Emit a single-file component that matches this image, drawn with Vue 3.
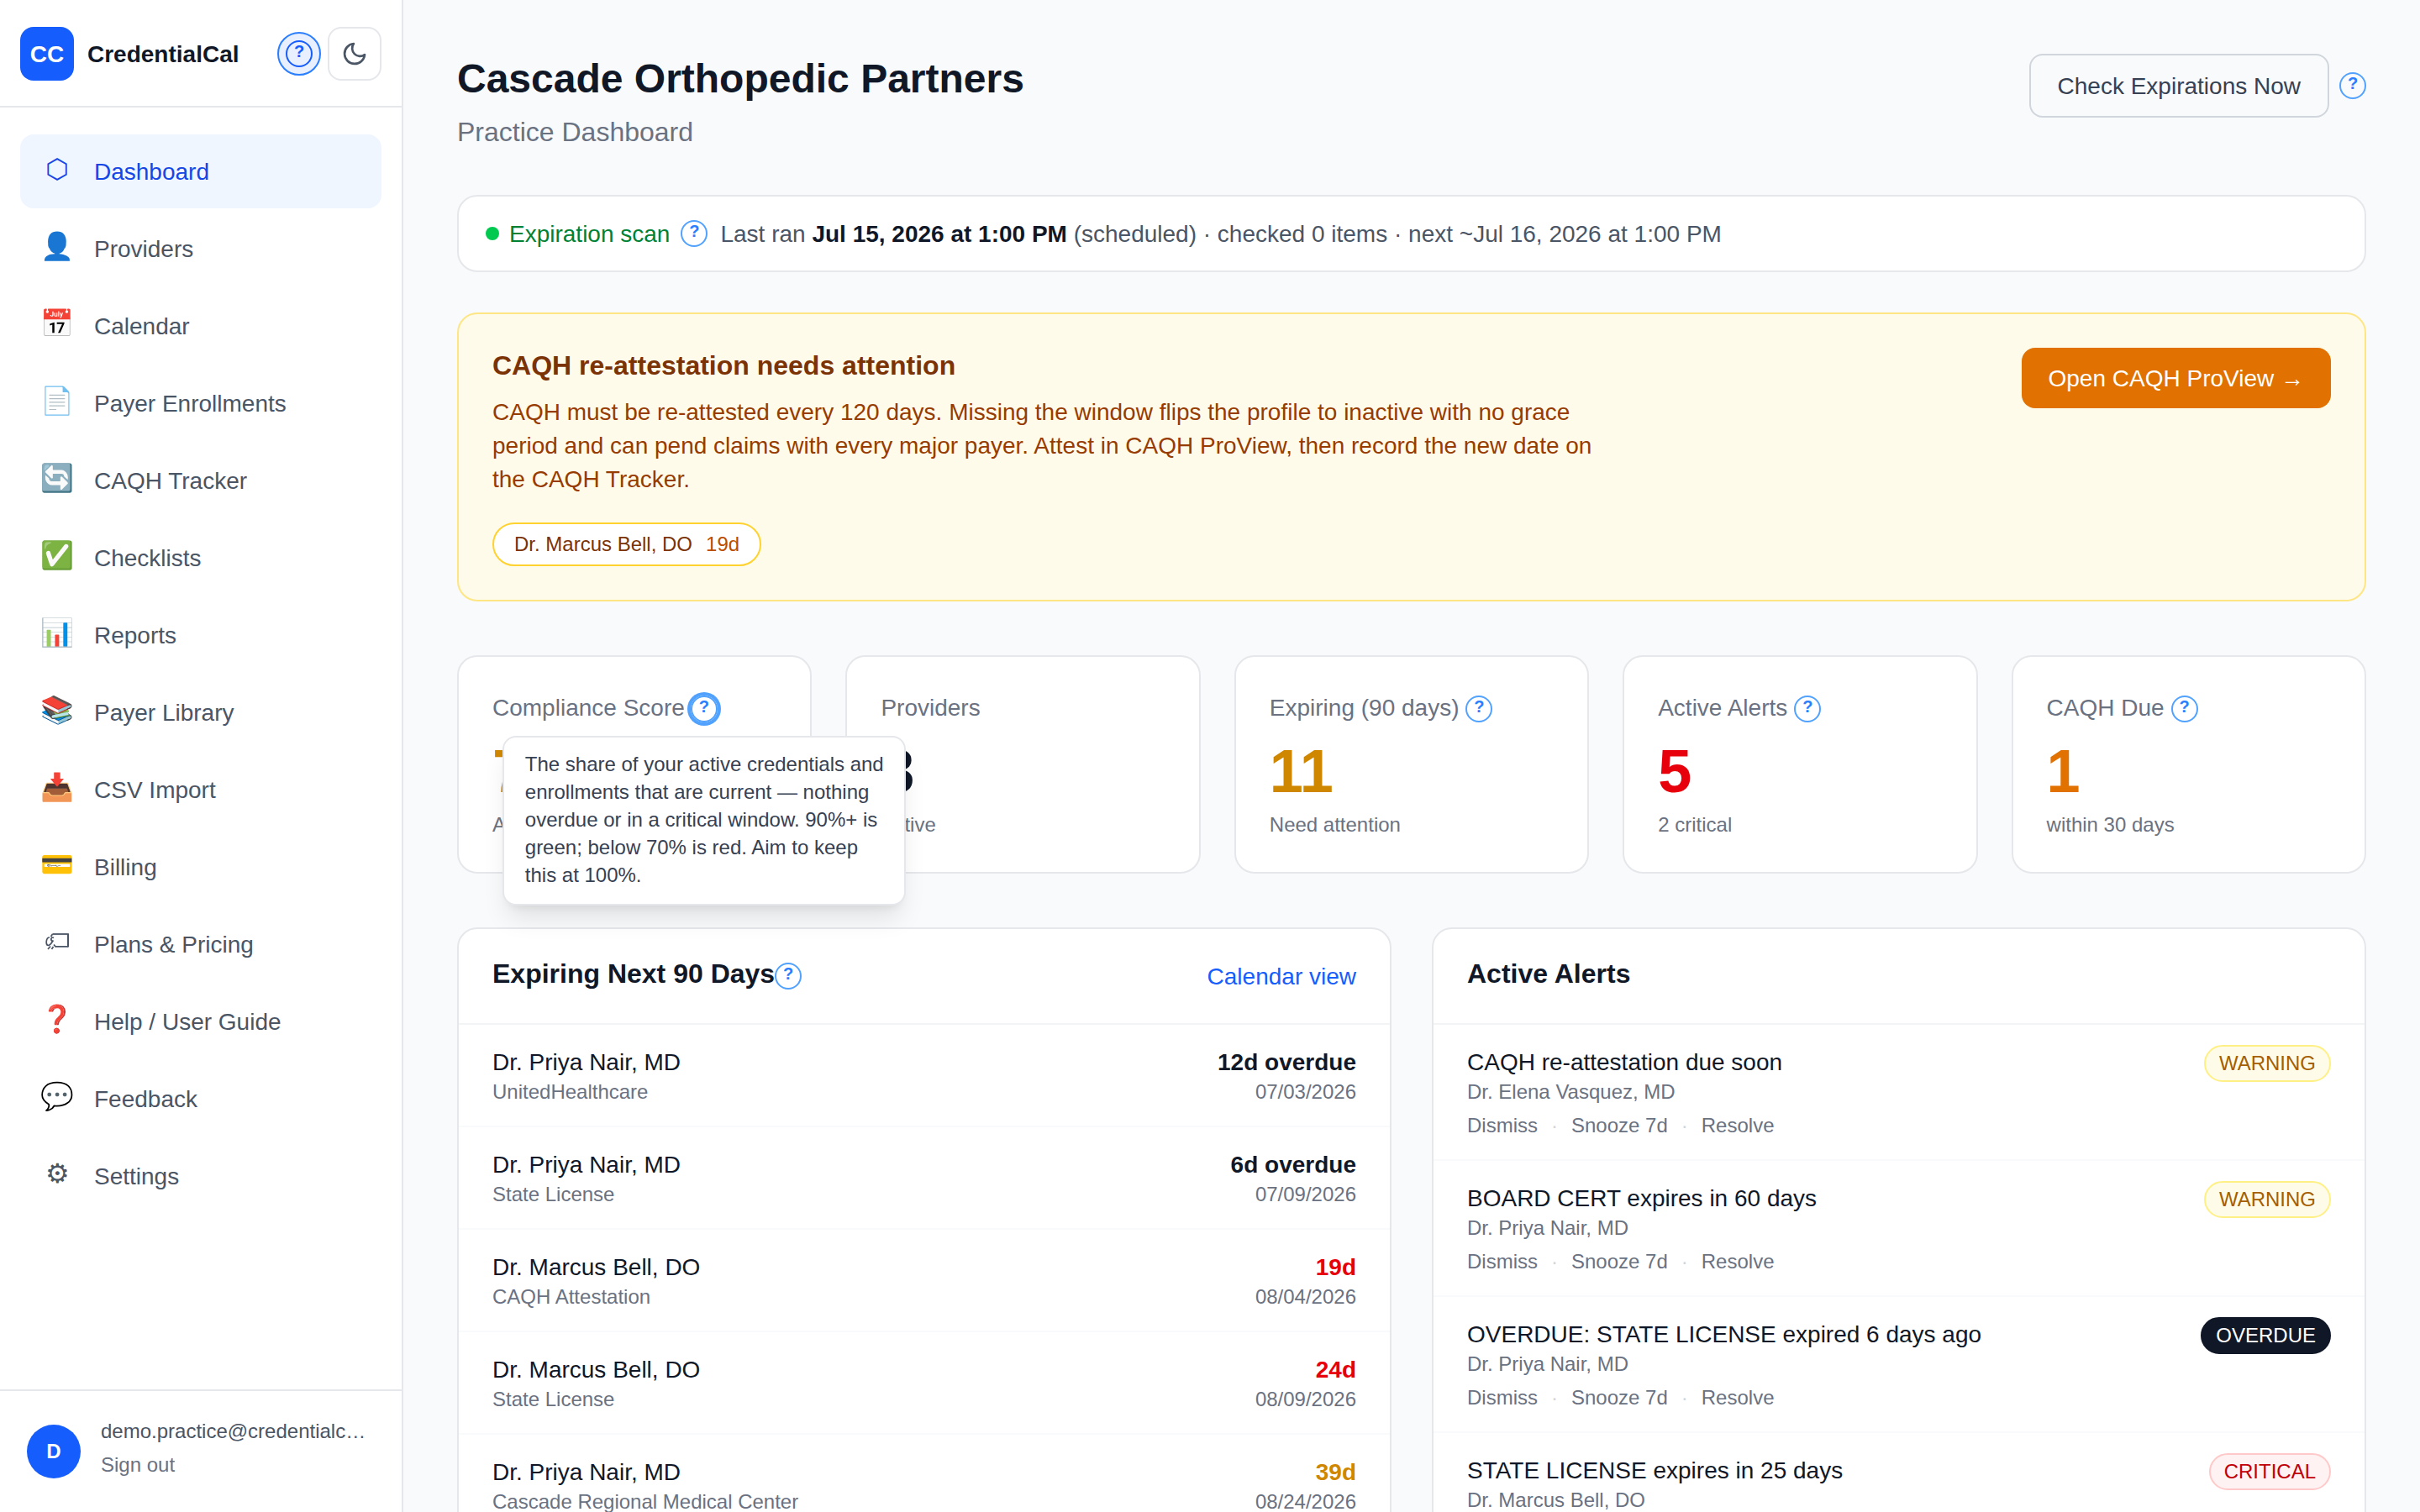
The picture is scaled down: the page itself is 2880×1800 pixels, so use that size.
<template>
    <div class="layout">
        <aside class="sidebar">
            <div class="brand">
                <div class="logo">CC</div>
                <span class="brand-name">CredentialCal</span>
                <button class="tour-btn" title="Help"><span class="help help-strong">?</span></button>
                <button class="theme-btn" title="Toggle theme">
                    <svg viewBox="0 0 24 24" fill="none" stroke="currentColor" stroke-width="2" stroke-linecap="round" stroke-linejoin="round">
                        <path d="M21 12.79A9 9 0 1 1 11.21 3 7 7 0 0 0 21 12.79z" />
                    </svg>
                </button>
            </div>
            <nav class="menu">
                <a v-for="item in menu" :key="item.label" class="menu-item" :class="{ active: item.active }">
                    <span v-if="item.icon" class="menu-icon">{{ item.icon }}</span>
                    <span v-else class="menu-icon">
                        <svg class="tag-icon" viewBox="0 0 28 20" fill="none" stroke="currentColor">
                            <path d="M8.5 1H26.5" stroke-width="1.8" />
                            <path d="M27 0.3V16.6" stroke-width="2" />
                            <path d="M27 15.8H12L10 13.5" stroke-width="1.8" />
                            <path d="M8.5 1L6.5 4M10 5.5C7 3.5 5.5 8 8.5 9.5" stroke-width="1.7" />
                            <path d="M5 5C0.5 5 0 14 3.5 14.5C6 14.5 7.5 11 9.5 8.5M3 19L6 15.5M7.5 19L9.5 16" stroke-width="1.7" />
                        </svg>
                    </span>
                    <span class="menu-label">{{ item.label }}</span>
                </a>
            </nav>
            <div class="account">
                <div class="avatar">D</div>
                <div class="account-info">
                    <div class="email">demo.practice@credentialcal.com</div>
                    <div class="sign-out">Sign out</div>
                </div>
            </div>
        </aside>

        <main class="main">
            <header class="page-header">
                <div>
                    <h1>Cascade Orthopedic Partners</h1>
                    <p>Practice Dashboard</p>
                </div>
                <div class="header-actions">
                    <button class="btn-outline">Check Expirations Now</button>
                    <span class="help">?</span>
                </div>
            </header>

            <section class="scan">
                <span class="dot"></span>
                <span class="scan-label">Expiration scan</span>
                <span class="help">?</span>
                <span class="scan-text">Last ran <b>Jul 15, 2026 at 1:00 PM</b> (scheduled) · checked 0 items · next ~Jul 16, 2026 at 1:00 PM</span>
            </section>

            <section class="banner">
                <div class="banner-body">
                    <h2>CAQH re-attestation needs attention</h2>
                    <p>CAQH must be re-attested every 120 days. Missing the window flips the profile to inactive with no grace period and can pend claims with every major payer. Attest in CAQH ProView, then record the new date on the CAQH Tracker.</p>
                    <span class="chip">Dr. Marcus Bell, DO <em>19d</em></span>
                </div>
                <button class="btn-amber">Open CAQH ProView →</button>
            </section>

            <section class="stats">
                <div v-for="stat in stats" :key="stat.label" class="stat">
                    <div class="stat-label">
                        {{ stat.label }}
                        <span v-if="stat.help" class="help" :class="{ focused: stat.tip }">?
                            <span v-if="stat.tip" class="tooltip">{{ stat.tip }}</span>
                        </span>
                    </div>
                    <div class="stat-value" :class="stat.color">{{ stat.value }}</div>
                    <div class="stat-note">{{ stat.note }}</div>
                </div>
            </section>

            <section class="panels">
                <div class="panel">
                    <div class="panel-header">
                        <h2>Expiring Next 90 Days</h2>
                        <span class="help">?</span>
                        <a class="panel-link">Calendar view</a>
                    </div>
                    <div v-for="(row, i) in expiring" :key="i" class="row">
                        <div>
                            <div class="name">{{ row.name }}</div>
                            <div class="sub">{{ row.type }}</div>
                        </div>
                        <div class="due">
                            <div class="days" :class="row.color">{{ row.days }}</div>
                            <div class="sub">{{ row.date }}</div>
                        </div>
                    </div>
                </div>
                <div class="panel">
                    <div class="panel-header">
                        <h2>Active Alerts</h2>
                    </div>
                    <div v-for="(alert, i) in alerts" :key="i" class="row">
                        <div>
                            <div class="name">{{ alert.title }}</div>
                            <div class="sub">{{ alert.name }}</div>
                            <div class="actions">
                                <span>Dismiss</span><i>·</i><span>Snooze 7d</span><i>·</i><span>Resolve</span>
                            </div>
                        </div>
                        <span class="badge" :class="alert.level.toLowerCase()">{{ alert.level }}</span>
                    </div>
                </div>
            </section>
        </main>
    </div>
</template>

<script setup>
import { ref } from 'vue';

// an item without an icon character gets the drawn tag
const menu = ref([
    { icon: '⬡', label: 'Dashboard', active: true },
    { icon: '👤', label: 'Providers' },
    { icon: '📅', label: 'Calendar' },
    { icon: '📄', label: 'Payer Enrollments' },
    { icon: '🔄', label: 'CAQH Tracker' },
    { icon: '✅', label: 'Checklists' },
    { icon: '📊', label: 'Reports' },
    { icon: '📚', label: 'Payer Library' },
    { icon: '📥', label: 'CSV Import' },
    { icon: '💳', label: 'Billing' },
    { label: 'Plans & Pricing' },
    { icon: '❓', label: 'Help / User Guide' },
    { icon: '💬', label: 'Feedback' },
    { icon: '⚙', label: 'Settings' },
]);

const stats = ref([
    {
        label: 'Compliance Score',
        value: '73%',
        note: 'Active items',
        color: 'yellow',
        help: true,
        tip: 'The share of your active credentials and enrollments that are current — nothing overdue or in a critical window. 90%+ is green; below 70% is red. Aim to keep this at 100%.',
    },
    { label: 'Providers', value: '3', note: 'Active', color: 'dark' },
    { label: 'Expiring (90 days)', value: '11', note: 'Need attention', color: 'yellow', help: true },
    { label: 'Active Alerts', value: '5', note: '2 critical', color: 'red', help: true },
    { label: 'CAQH Due', value: '1', note: 'within 30 days', color: 'amber', help: true },
]);

const expiring = ref([
    { name: 'Dr. Priya Nair, MD', type: 'UnitedHealthcare', days: '12d overdue', date: '07/03/2026', color: 'dark' },
    { name: 'Dr. Priya Nair, MD', type: 'State License', days: '6d overdue', date: '07/09/2026', color: 'dark' },
    { name: 'Dr. Marcus Bell, DO', type: 'CAQH Attestation', days: '19d', date: '08/04/2026', color: 'red' },
    { name: 'Dr. Marcus Bell, DO', type: 'State License', days: '24d', date: '08/09/2026', color: 'red' },
    { name: 'Dr. Priya Nair, MD', type: 'Cascade Regional Medical Center', days: '39d', date: '08/24/2026', color: 'yellow' },
]);

const alerts = ref([
    { title: 'CAQH re-attestation due soon', name: 'Dr. Elena Vasquez, MD', level: 'WARNING' },
    { title: 'BOARD CERT expires in 60 days', name: 'Dr. Priya Nair, MD', level: 'WARNING' },
    { title: 'OVERDUE: STATE LICENSE expired 6 days ago', name: 'Dr. Priya Nair, MD', level: 'OVERDUE' },
    { title: 'STATE LICENSE expires in 25 days', name: 'Dr. Marcus Bell, DO', level: 'CRITICAL' },
]);
</script>

<style>
body {
    margin: 0;
    background: #f9fafb;
}
</style>

<style scoped>
* {
    box-sizing: border-box;
}

.layout {
    display: flex;
    height: 1800px;
    overflow: hidden;
    background: #f9fafb;
    color: #101828;
    font-family: "Liberation Sans", Arial, sans-serif;
    font-size: 28px;
    line-height: 40px;
}

h1,
h2,
p {
    margin: 0;
}

button {
    font: inherit;
    background: none;
    white-space: nowrap;
}

/* Sidebar */
.sidebar {
    display: flex;
    flex-direction: column;
    flex-shrink: 0;
    width: 480px;
    background: #fff;
    border-right: 2px solid #e5e7eb;
}

.brand {
    display: flex;
    align-items: center;
    height: 128px;
    padding: 2px 24px 0;
    border-bottom: 2px solid #e5e7eb;
}

.logo {
    width: 64px;
    height: 64px;
    border-radius: 16px;
    background: #155dfc;
    color: #fff;
    font-weight: bold;
    line-height: 66px;
    text-align: center;
}

.brand-name {
    flex: 1;
    padding-top: 2px;
    margin-left: 16px;
    font-weight: bold;
}

.tour-btn {
    display: flex;
    align-items: center;
    justify-content: center;
    width: 52px;
    height: 52px;
    padding: 0;
    margin-right: 8px;
    border: 2px solid #2b7fff;
    border-radius: 50%;
    background: #e8effe;
}

.theme-btn {
    display: flex;
    align-items: center;
    justify-content: center;
    width: 64px;
    height: 64px;
    padding: 0;
    border: 2px solid #e5e7eb;
    border-radius: 16px;
    color: #4a5565;
}

.theme-btn svg {
    width: 32px;
    height: 32px;
}

.menu {
    display: flex;
    flex-direction: column;
    flex: 1;
    gap: 4px;
    padding: 32px 24px;
}

.menu-item {
    display: flex;
    align-items: center;
    gap: 24px;
    height: 88px;
    padding: 0 24px;
    border-radius: 16px;
    color: #4a5565;
}

.menu-item.active {
    background: #eff6ff;
    color: #1447e6;
}

.menu-icon {
    display: flex;
    align-items: center;
    justify-content: center;
    width: 40px;
    padding-bottom: 6px;
    font-size: 32px;
    line-height: 48px;
}

.tag-icon {
    width: 28px;
    height: 20px;
}

.menu-label {
    padding-top: 2px;
}

.account {
    display: flex;
    align-items: center;
    gap: 24px;
    height: 146px;
    padding: 0 32px;
    border-top: 2px solid #e5e7eb;
    font-size: 24px;
}

.avatar {
    flex-shrink: 0;
    width: 64px;
    height: 64px;
    border-radius: 50%;
    background: #155dfc;
    color: #fff;
    font-weight: bold;
    line-height: 64px;
    text-align: center;
}

.account-info {
    min-width: 0;
}

.email {
    overflow: hidden;
    color: #4a5565;
    line-height: 32px;
    text-overflow: ellipsis;
    white-space: nowrap;
}

.sign-out {
    color: #6a7282;
    line-height: 48px;
}

/* Round question mark */
.help {
    position: relative;
    flex-shrink: 0;
    width: 32px;
    height: 32px;
    border: 2px solid #51a2ff;
    border-radius: 50%;
    color: #2b7fff;
    font-size: 20px;
    font-weight: bold;
    line-height: 22px;
    text-align: center;
}

.help-strong {
    border-color: #155dfc;
    color: #155dfc;
}

.help.focused {
    margin-left: -1px;
    box-shadow: 0 0 0 4px #51a2ff;
}

.tooltip {
    position: absolute;
    top: 46px;
    left: 50%;
    z-index: 10;
    width: 480px;
    padding: 15px 23px 18px 25px;
    transform: translateX(-50%);
    border: 2px solid #e5e7eb;
    border-radius: 16px;
    background: #fff;
    box-shadow: 0 20px 30px -6px rgba(0, 0, 0, 0.1), 0 8px 12px -8px rgba(0, 0, 0, 0.1);
    color: #364153;
    font-size: 24px;
    font-weight: normal;
    line-height: 33px;
    text-align: left;
}

/* Page */
.main {
    flex: 1;
    min-width: 0;
    padding: 64px;
}

.page-header {
    display: flex;
    align-items: flex-start;
    justify-content: space-between;
    height: 120px;
    margin-bottom: 48px;
}

h1 {
    font-size: 48px;
    line-height: 60px;
}

h2 {
    font-size: 32px;
    line-height: 42px;
}

.page-header p {
    margin-top: 9px;
    color: #6a7282;
    font-size: 32px;
    line-height: 48px;
}

.header-actions {
    display: flex;
    align-items: center;
    gap: 12px;
}

.btn-outline {
    padding: 17px 32px 15px;
    border: 2px solid #d1d5dc;
    border-radius: 16px;
    color: #364153;
}

.scan {
    display: flex;
    align-items: center;
    height: 92px;
    padding: 0 32px;
    margin-bottom: 48px;
    border: 2px solid #e5e7eb;
    border-radius: 24px;
    background: #fff;
}

.dot {
    width: 16px;
    height: 16px;
    margin-right: 12px;
    border-radius: 50%;
    background: #00c950;
}

.scan-label {
    padding-top: 2px;
    margin-right: 13px;
    color: #008236;
}

.scan-text {
    padding-top: 2px;
    margin-left: 15px;
    color: #4a5565;
}

.scan-text b {
    color: #101828;
}

.banner {
    display: flex;
    align-items: flex-start;
    justify-content: space-between;
    height: 344px;
    padding: 40px;
    margin-bottom: 64px;
    border: 2px solid #fee685;
    border-radius: 24px;
    background: #fffbeb;
    color: #973c00;
}

.banner h2 {
    color: #7b3306;
}

.banner p {
    max-width: 1344px;
    margin: 15px 0 31px;
}

.chip {
    display: inline-flex;
    gap: 16px;
    padding: 8px 24px;
    border: 2px solid #ffd230;
    border-radius: 26px;
    background: #fff;
    color: #7b3306;
    font-size: 24px;
    line-height: 32px;
}

.chip em {
    color: #bb4d00;
    font-style: normal;
}

.btn-amber {
    padding: 17px 32px 15px;
    border: none;
    border-radius: 16px;
    background: #e17100;
    color: #fff;
}

.stats {
    display: grid;
    grid-template-columns: repeat(5, 1fr);
    gap: 40px;
    margin-bottom: 64px;
}

.stat {
    height: 260px;
    padding: 41px 40px 39px;
    border: 2px solid #e5e7eb;
    border-radius: 24px;
    background: #fff;
}

.stat-label {
    display: flex;
    gap: 8px;
    height: 40px;
    color: #6a7282;
}

.stat-label .help {
    margin-top: 5px;
}

.stat-value {
    margin: 15px 0 8px;
    font-size: 72px;
    font-weight: bold;
    line-height: 80px;
}

.stat-note {
    color: #6a7282;
    font-size: 24px;
    line-height: 32px;
}

.panels {
    display: grid;
    grid-template-columns: 1fr 1fr;
    gap: 48px;
}

.panel {
    border: 2px solid #e5e7eb;
    border-radius: 24px;
    background: #fff;
}

.panel-header {
    display: flex;
    align-items: flex-start;
    height: 114px;
    padding: 32px 40px;
    border-bottom: 2px solid #f3f4f6;
}

.panel-header .help {
    margin-top: 8px;
}

.panel-link {
    margin: 5px 0 0 auto;
    color: #155dfc;
}

.row {
    display: flex;
    align-items: flex-start;
    justify-content: space-between;
    padding: 24px 40px;
    border-bottom: 2px solid #f9fafb;
}

.name,
.days {
    margin-bottom: -2px;
    line-height: 42px;
}

.sub,
.actions {
    color: #6a7282;
    font-size: 24px;
    line-height: 32px;
}

.actions {
    display: flex;
    gap: 16px;
    margin-top: 8px;
}

.actions i {
    color: #d1d5dc;
    font-style: normal;
}

.due {
    text-align: right;
}

.days {
    font-weight: bold;
}

.dark {
    color: #101828;
}

.red {
    color: #e7000b;
}

.yellow {
    color: #d08700;
}

.amber {
    color: #e17100;
}

.badge {
    padding: 4px 16px;
    border: 2px solid;
    border-radius: 22px;
    font-size: 24px;
    line-height: 32px;
}

.badge.warning {
    border-color: #fff085;
    background: #fefce8;
    color: #a65f00;
}

.badge.overdue {
    border-color: #101828;
    background: #101828;
    color: #fff;
}

.badge.critical {
    border-color: #ffc9c9;
    background: #fef2f2;
    color: #c10007;
}
</style>
